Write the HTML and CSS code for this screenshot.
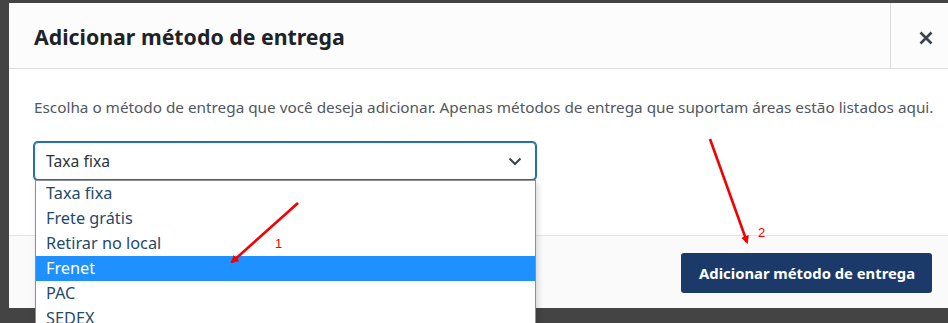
FILE: index.html
```html
<!DOCTYPE html>
<html lang="pt-BR">
<head>
    <meta charset="UTF-8">
    <meta name="viewport" content="width=device-width, initial-scale=1.0">
    <title>Adicionar método de entrega</title>
    <link rel="stylesheet" href="styles.css">
</head>
<body>
    <!-- Janela de adicionar método de entrega -->
    <div class="modal">
        <div class="modal-header">
            <h1 class="modal-title">Adicionar método de entrega</h1>
            <button class="modal-close" aria-label="Fechar">
                <svg width="14" height="14" viewBox="0 0 14 14">
                    <path d="M1.5 1.5 L12.5 12.5 M12.5 1.5 L1.5 12.5" stroke="#3c434a" stroke-width="2.6" fill="none"/>
                </svg>
            </button>
        </div>

        <div class="modal-body">
            <p class="modal-text">Escolha o método de entrega que você deseja adicionar. Apenas métodos de entrega que suportam áreas estão listados aqui.</p>

            <div class="select-wrap">
                <div class="select-box">
                    <span>Taxa fixa</span>
                    <svg class="chevron" width="14" height="9" viewBox="0 0 14 9">
                        <path d="M1.5 1.5 L7 7 L12.5 1.5" stroke="#3c434a" stroke-width="2" fill="none"/>
                    </svg>
                </div>
                <ul class="select-list">
                    <li>Taxa fixa</li>
                    <li>Frete grátis</li>
                    <li>Retirar no local</li>
                    <li class="active">Frenet</li>
                    <li>PAC</li>
                    <li>SEDEX</li>
                </ul>
            </div>
        </div>

        <div class="modal-footer">
            <button class="btn-primary">Adicionar método de entrega</button>
        </div>
    </div>

    <!-- Anotações (setas vermelhas) -->
    <svg class="notes" width="948" height="323" viewBox="0 0 948 323">
        <defs>
            <marker id="head" markerWidth="8" markerHeight="8" refX="6" refY="4" orient="auto" markerUnits="userSpaceOnUse">
                <path d="M0 0 L8 4 L0 8 Z" fill="#f40000"/>
            </marker>
        </defs>
        <line x1="298" y1="203" x2="232" y2="262" stroke="#f40000" stroke-width="2.6" marker-end="url(#head)"/>
        <line x1="710" y1="139" x2="747" y2="242" stroke="#f40000" stroke-width="2.6" marker-end="url(#head)"/>
        <text x="275" y="248" class="note-num">1</text>
        <text x="758" y="237" class="note-num">2</text>
    </svg>
</body>
</html>
```

FILE: styles.css
```css
/* Base */
body {
    margin: 0;
    padding: 3px 0 0 9px;
    background-color: #444444;
    font-family: 'Noto Sans', 'Open Sans', sans-serif;
    overflow: hidden;
    height: 320px;
    position: relative;
}

/* Janela */
.modal {
    background-color: #fff;
    width: 939px;
    height: 305px;
    display: flex;
    flex-direction: column;
}

/* Cabeçalho */
.modal-header {
    height: 65px;
    display: flex;
    align-items: center;
    background-color: #fcfcfc;
    border-bottom: 1px solid #dcdcde;
}

.modal-title {
    flex: 1;
    margin: 0;
    padding: 1px 0 0 25px;
    font-size: 21.3px;
    font-weight: 700;
    color: #1d2327;
}

.modal-close {
    width: 58px;
    height: 100%;
    background: none;
    border: none;
    border-left: 1px solid #dcdcde;
    padding: 4px 0 0 12px;
    display: flex;
    align-items: center;
    justify-content: center;
}

/* Corpo */
.modal-body {
    flex: 1;
    padding: 28px 25px 0;
    box-sizing: border-box;
    height: 165px;
}

.modal-text {
    margin: 0 0 25px;
    font-size: 15.3px;
    color: #50575e;
    line-height: 20px;
    white-space: nowrap;
}

.select-wrap {
    position: relative;
    width: 502px;
    z-index: 5;
}

.select-box {
    height: 38px;
    box-sizing: border-box;
    border: 1px solid #2271b1;
    box-shadow: 0 0 0 1px #2271b1;
    border-radius: 4px;
    display: flex;
    align-items: center;
    justify-content: space-between;
    padding: 0 13px 0 11px;
    font-size: 15.7px;
    color: #2c3338;
    background: #fff;
}

.chevron {
    margin-top: 1px;
}

/* Lista aberta do seletor */
.select-list {
    position: absolute;
    top: 38px;
    left: 1px;
    width: 499px;
    margin: 0;
    padding: 0;
    list-style: none;
    background: #fff;
    border: 1px solid #8c8f94;
    border-bottom: none;
    box-shadow: 2px 2px 6px rgba(0, 0, 0, 0.15);
}

.select-list li {
    height: 25px;
    line-height: 25px;
    padding-left: 10px;
    font-size: 16.3px;
    color: #1f4a68;
}

.select-list li.active {
    background-color: #1e90ff;
    color: #fff;
}

/* Rodapé */
.modal-footer {
    height: 72px;
    display: flex;
    align-items: center;
    justify-content: flex-end;
    padding-right: 16px;
    background-color: #fafafa;
    border-top: 1px solid #e4e4e4;
}

.btn-primary {
    height: 40px;
    padding: 0 17px 0 18px;
    border: none;
    border-radius: 3px;
    background-color: #1b3a6a;
    color: #fff;
    font-family: inherit;
    font-size: 14.8px;
    font-weight: 700;
    margin-top: 1px;
}

/* Anotações */
.notes {
    position: absolute;
    top: 0;
    left: 0;
    z-index: 10;
}

.note-num {
    fill: #f40000;
    font-family: 'Liberation Sans', sans-serif;
    font-size: 13px;
}
```
